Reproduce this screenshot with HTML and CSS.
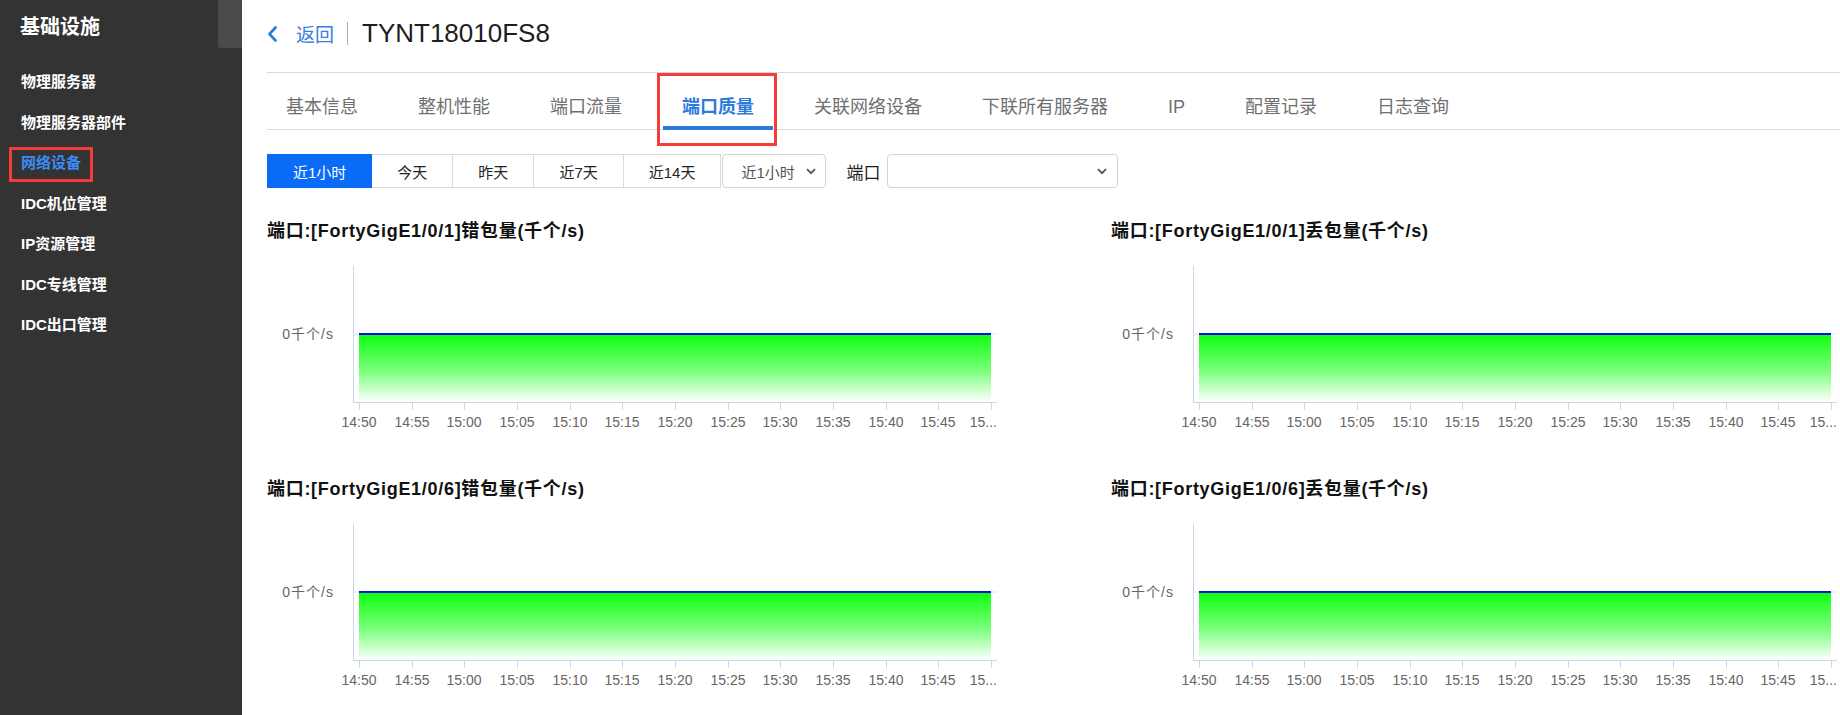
FILE: index.html
```html
<!DOCTYPE html>
<html lang="zh-CN">
<head>
<meta charset="utf-8">
<title>TYNT18010FS8</title>
<link rel="stylesheet" href="styles.css">
</head>
<body>
<div class="app">
  <aside class="sidebar">
    <div class="side-thumb"></div>
    <div class="side-title">基础设施</div>
    <ul class="side-menu">
      <li>物理服务器</li>
      <li>物理服务器部件</li>
      <li class="active">网络设备</li>
      <li>IDC机位管理</li>
      <li>IP资源管理</li>
      <li>IDC专线管理</li>
      <li>IDC出口管理</li>
    </ul>
    <div class="mark mark-side"></div>
  </aside>
  <main class="main">
    <header class="page-head">
      <a class="back"><svg class="back-icon" width="10" height="16" viewBox="0 0 10 16"><path d="M8.5 1.5 L2.5 8 L8.5 14.5" fill="none" stroke="#2b7bdc" stroke-width="2.6" stroke-linecap="round" stroke-linejoin="round"/></svg><span class="back-text">返回</span></a>
      <span class="divider"></span>
      <h1 class="page-title">TYNT18010FS8</h1>
    </header>
    <nav class="tabs">
      <div class="tab">基本信息</div>
      <div class="tab">整机性能</div>
      <div class="tab">端口流量</div>
      <div class="tab active">端口质量<span class="mark mark-tab"></span></div>
      <div class="tab">关联网络设备</div>
      <div class="tab">下联所有服务器</div>
      <div class="tab">IP</div>
      <div class="tab">配置记录</div>
      <div class="tab">日志查询</div>
    </nav>
    <div class="filters">
      <div class="btn-group">
        <button class="btn active">近1小时</button>
        <button class="btn">今天</button>
        <button class="btn">昨天</button>
        <button class="btn">近7天</button>
        <button class="btn">近14天</button>
      </div>
      <div class="select select-range"><span>近1小时</span><svg width="10" height="7" viewBox="0 0 10 7"><path d="M1 1.2 L5 5.2 L9 1.2" fill="none" stroke="#555" stroke-width="1.8"/></svg></div>
      <span class="port-label">端口</span>
      <div class="select select-port"><span></span><svg width="10" height="7" viewBox="0 0 10 7"><path d="M1 1.2 L5 5.2 L9 1.2" fill="none" stroke="#555" stroke-width="1.8"/></svg></div>
    </div>
    <div class="charts" id="charts">
      <section class="chart"><h3 class="chart-title">端口:[FortyGigE1/0/1]错包量(千个/s)</h3><div class="plot"></div></section>
      <section class="chart right"><h3 class="chart-title">端口:[FortyGigE1/0/1]丢包量(千个/s)</h3><div class="plot"></div></section>
      <section class="chart"><h3 class="chart-title">端口:[FortyGigE1/0/6]错包量(千个/s)</h3><div class="plot"></div></section>
      <section class="chart right"><h3 class="chart-title">端口:[FortyGigE1/0/6]丢包量(千个/s)</h3><div class="plot"></div></section>
    </div>
  </main>
</div>
<script src="app.js"></script>
</body>
</html>
```
FILE: styles.css
```css
* { box-sizing: border-box; }
html, body { margin: 0; padding: 0; }
body {
  width: 1840px;
  height: 715px;
  overflow: hidden;
  background: #fff;
  font-family: "Liberation Sans", "Noto Sans CJK SC", sans-serif;
  color: #222;
}
.app { display: flex; height: 715px; }

.sidebar {
  position: relative;
  width: 242px;
  flex: 0 0 242px;
  background: #333333;
  color: #fff;
}
.side-thumb {
  position: absolute;
  right: 0;
  top: 0;
  width: 24px;
  height: 48px;
  background: #4a4a4a;
  border-bottom-left-radius: 3px;
}
.side-title {
  height: 62px;
  padding: 15px 0 0 20px;
  line-height: 24px;
  font-size: 20px;
  font-weight: bold;
}
.side-menu { list-style: none; margin: 0; padding: 0; }
.side-menu li {
  height: 40.5px;
  line-height: 40.5px;
  padding-left: 21px;
  font-size: 15px;
  font-weight: bold;
  color: #fff;
}
.side-menu li.active { color: #3d8bf2; }

.mark { position: absolute; border: 3px solid #f53b3b; pointer-events: none; }
.mark-side { left: 9px; top: 147px; width: 84px; height: 35px; }

.main {
  flex: 1;
  min-width: 0;
  padding-left: 25px;
  overflow: hidden;
}

.page-head {
  display: flex;
  align-items: center;
  height: 73px;
  padding-bottom: 5px;
  border-bottom: 1px solid #d9d9d9;
}
.back { display: flex; align-items: center; color: #2b7bdc; text-decoration: none; }
.back-icon { display: block; }
.back-text { margin-left: 19px; font-size: 19px; color: #3580d8; }
.divider { width: 1px; height: 23px; background: #aaa; margin: 0 14px 0 13px; }
.page-title { margin: 0; font-size: 26px; font-weight: normal; color: #1e1e1e; }

.tabs {
  display: flex;
  gap: 22px;
  height: 57px;
  border-bottom: 1px solid #d9d9d9;
}
.tab {
  position: relative;
  height: 57px;
  margin-bottom: -1px;
  padding: 22px 19px 0;
  line-height: 24px;
  font-size: 18px;
  color: #707070;
  border-bottom: 4px solid transparent;
  white-space: nowrap;
}
.tab.active { color: #2b7bdc; font-weight: bold; border-bottom-color: #2b7bdc; }
.mark-tab { left: -6px; top: 0; width: 120px; height: 73px; }

.filters {
  display: flex;
  align-items: center;
  margin-top: 24px;
  height: 34px;
}
.btn-group { display: flex; }
.btn {
  height: 34px;
  padding: 0 25px;
  margin-left: -1px;
  border: 1px solid #dcdcdc;
  background: #fff;
  font-family: inherit;
  font-size: 15px;
  color: #222;
}
.btn:first-child { margin-left: 0; }
.btn.active { background: #0a6cf6; border-color: #0a6cf6; color: #fff; position: relative; }
.select {
  display: flex;
  align-items: center;
  justify-content: space-between;
  height: 34px;
  border: 1px solid #d4d4d4;
  border-radius: 4px;
  background: #fff;
  font-size: 15px;
  color: #555;
}
.select-range { width: 104px; padding: 0 9px 0 18px; margin-left: 1px; }
.select-port { width: 231px; padding: 0 10px 0 12px; margin-left: 7px; }
.port-label { margin-left: 20px; font-size: 17px; color: #1e1e1e; }

.charts {
  display: grid;
  grid-template-columns: 844px 729px;
  margin-top: 31px;
}
.chart { height: 258px; overflow: hidden; }
.chart-title {
  margin: 0;
  height: 24px;
  line-height: 24px;
  font-size: 18px;
  font-weight: bold;
  letter-spacing: 0.7px;
  color: #111;
  white-space: nowrap;
}
.plot { height: 200px; }
.plot svg { display: block; }
.chart.right .plot svg { margin-left: -4px; }
.axis-label { font-family: "Liberation Sans", "Noto Sans CJK SC", sans-serif; font-size: 14px; fill: #666; }
.y-label { letter-spacing: 1px; }
```
FILE: app.js
```js
(function () {
  var labels = ["14:50","14:55","15:00","15:05","15:10","15:15","15:20","15:25","15:30","15:35","15:40","15:45"];
  var x0 = 92, step = (724 - 92) / 12;
  function build(idx) {
    var gid = "g" + idx;
    var s = '<svg width="740" height="200" viewBox="0 0 740 200">';
    s += '<defs><linearGradient id="' + gid + '" x1="0" y1="0" x2="0" y2="1">' +
         '<stop offset="0" stop-color="#0cff0c"/><stop offset="0.55" stop-color="#7dff7d"/><stop offset="1" stop-color="#ffffff"/></linearGradient></defs>';
    s += '<line x1="86" y1="91" x2="730" y2="91" stroke="#e6e6e6" stroke-width="1"/>';
    s += '<rect x="92" y="91" width="632" height="68" fill="url(#' + gid + ')"/>';
    s += '<line x1="92" y1="91" x2="724" y2="91" stroke="#0a0aff" stroke-width="2"/>';
    s += '<line x1="86.5" y1="23" x2="86.5" y2="159" stroke="#ccd6eb" stroke-width="1"/>';
    s += '<line x1="86" y1="159.5" x2="730" y2="159.5" stroke="#ccd6eb" stroke-width="1"/>';
    for (var i = 0; i <= 12; i++) {
      var x = Math.round(x0 + i * step) + 0.5;
      s += '<line x1="' + x + '" y1="159" x2="' + x + '" y2="167" stroke="#ccd6eb" stroke-width="1"/>';
      if (i < 12) {
        s += '<text class="axis-label" x="' + (x - 0.5) + '" y="184" text-anchor="middle">' + labels[i] + '</text>';
      }
    }
    s += '<text class="axis-label" x="730" y="184" text-anchor="end">15...</text>';
    s += '<text class="axis-label y-label" x="67" y="96" text-anchor="end">0千个/s</text>';
    s += '</svg>';
    return s;
  }
  var plots = document.querySelectorAll(".plot");
  for (var i = 0; i < plots.length; i++) plots[i].innerHTML = build(i);
})();
```
